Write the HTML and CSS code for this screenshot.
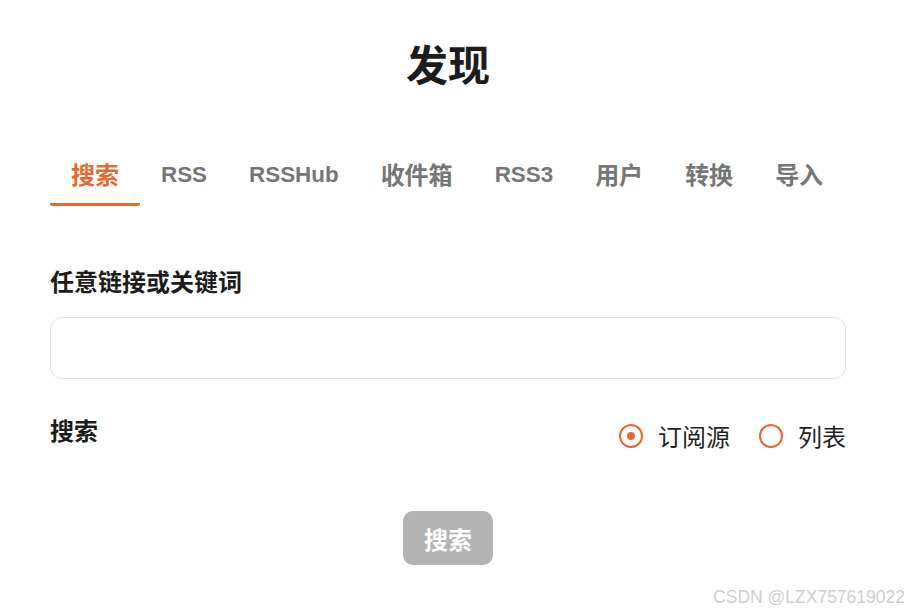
FILE: index.html
```html
<!DOCTYPE html>
<html lang="zh">
<head>
<meta charset="utf-8">
<link rel="stylesheet" href="styles.css">
</head>
<body>
<div class="page">
  <h1 class="title">发现</h1>
  <nav class="tabs">
    <div class="tab active">搜索</div>
    <div class="tab latin">RSS</div>
    <div class="tab latin">RSSHub</div>
    <div class="tab">收件箱</div>
    <div class="tab latin">RSS3</div>
    <div class="tab">用户</div>
    <div class="tab">转换</div>
    <div class="tab">导入</div>
  </nav>
  <label class="field-label">任意链接或关键词</label>
  <div class="input"></div>
  <div class="row">
    <div class="field-label">搜索</div>
    <div class="radios">
      <span class="radio checked"></span><span class="radio-text">订阅源</span>
      <span class="radio"></span><span class="radio-text">列表</span>
    </div>
  </div>
  <div class="btn-wrap"><button class="btn">搜索</button></div>
</div>
<div class="watermark">CSDN @LZX757619022</div>
</body>
</html>
```
FILE: styles.css
```css
* { box-sizing: border-box; }
html, body { margin: 0; padding: 0; background: #fff; }
body {
  width: 908px; height: 612px; overflow: hidden; position: relative;
  font-family: "Liberation Sans", "Noto Sans CJK SC", sans-serif;
  color: #1f1f1f;
}
.page { width: 796px; margin-left: 50px; padding-top: 41px; }
.title {
  margin: 0; text-align: center; font-size: 42px; line-height: 44px;
  font-weight: 700; color: #1c1c1c;
  font-family: "Noto Sans CJK SC", sans-serif;
}
.tabs { display: flex; margin-top: 73px; white-space: nowrap; }
.tab {
  flex-shrink: 0;
  padding: 0 21px 13px; font-size: 24px; line-height: 32px; font-weight: 700;
  color: #767676; border-bottom: 3px solid transparent;
  font-family: "Noto Sans CJK SC", sans-serif;
}
.tab.latin { font-size: 22.4px; padding-top: 1px; padding-bottom: 12px; font-family: "Liberation Sans", sans-serif; }
.tab.active { color: #e8692f; border-bottom-color: #e8692f; border-radius: 0 0 2px 2px; }
.field-label {
  display: block; font-size: 24px; line-height: 24px; font-weight: 700; color: #1c1c1c;
  font-family: "Noto Sans CJK SC", sans-serif;
}
.tabs + .field-label { margin-top: 63px; }
.input {
  margin-top: 24px; height: 62px; border: 1px solid #e2e2e2; border-radius: 12px;
}
.row { display: flex; justify-content: space-between; align-items: flex-start; margin-top: 39px; }
.radios { display: flex; align-items: center; height: 36px; white-space: nowrap; font-family: "Noto Sans CJK SC", sans-serif; }
.radio {
  flex-shrink: 0;
  width: 24px; height: 24px; border: 2px solid #e8692f; border-radius: 50%;
  display: flex; align-items: center; justify-content: center;
}
.radio.checked::after {
  content: ""; width: 8px; height: 8px; border-radius: 50%; background: #e8692f;
}
.radio-text { font-size: 24px; color: #1f1f1f; margin-left: 15px; margin-right: 29px; line-height: 36px; }
.radio-text:last-child { margin-right: 0; }
.btn-wrap { display: flex; justify-content: center; margin-top: 57px; }
.btn {
  width: 90px; height: 54px; border: none; border-radius: 10px; background: #b3b3b3;
  color: #fff; font-size: 24px; font-weight: 700; padding: 0;
  font-family: "Noto Sans CJK SC", sans-serif;
}
.watermark {
  position: absolute; right: 3px; bottom: 4px; font-size: 17.5px; color: #cfcfcf;
  font-family: "Liberation Sans", sans-serif;
}
```
